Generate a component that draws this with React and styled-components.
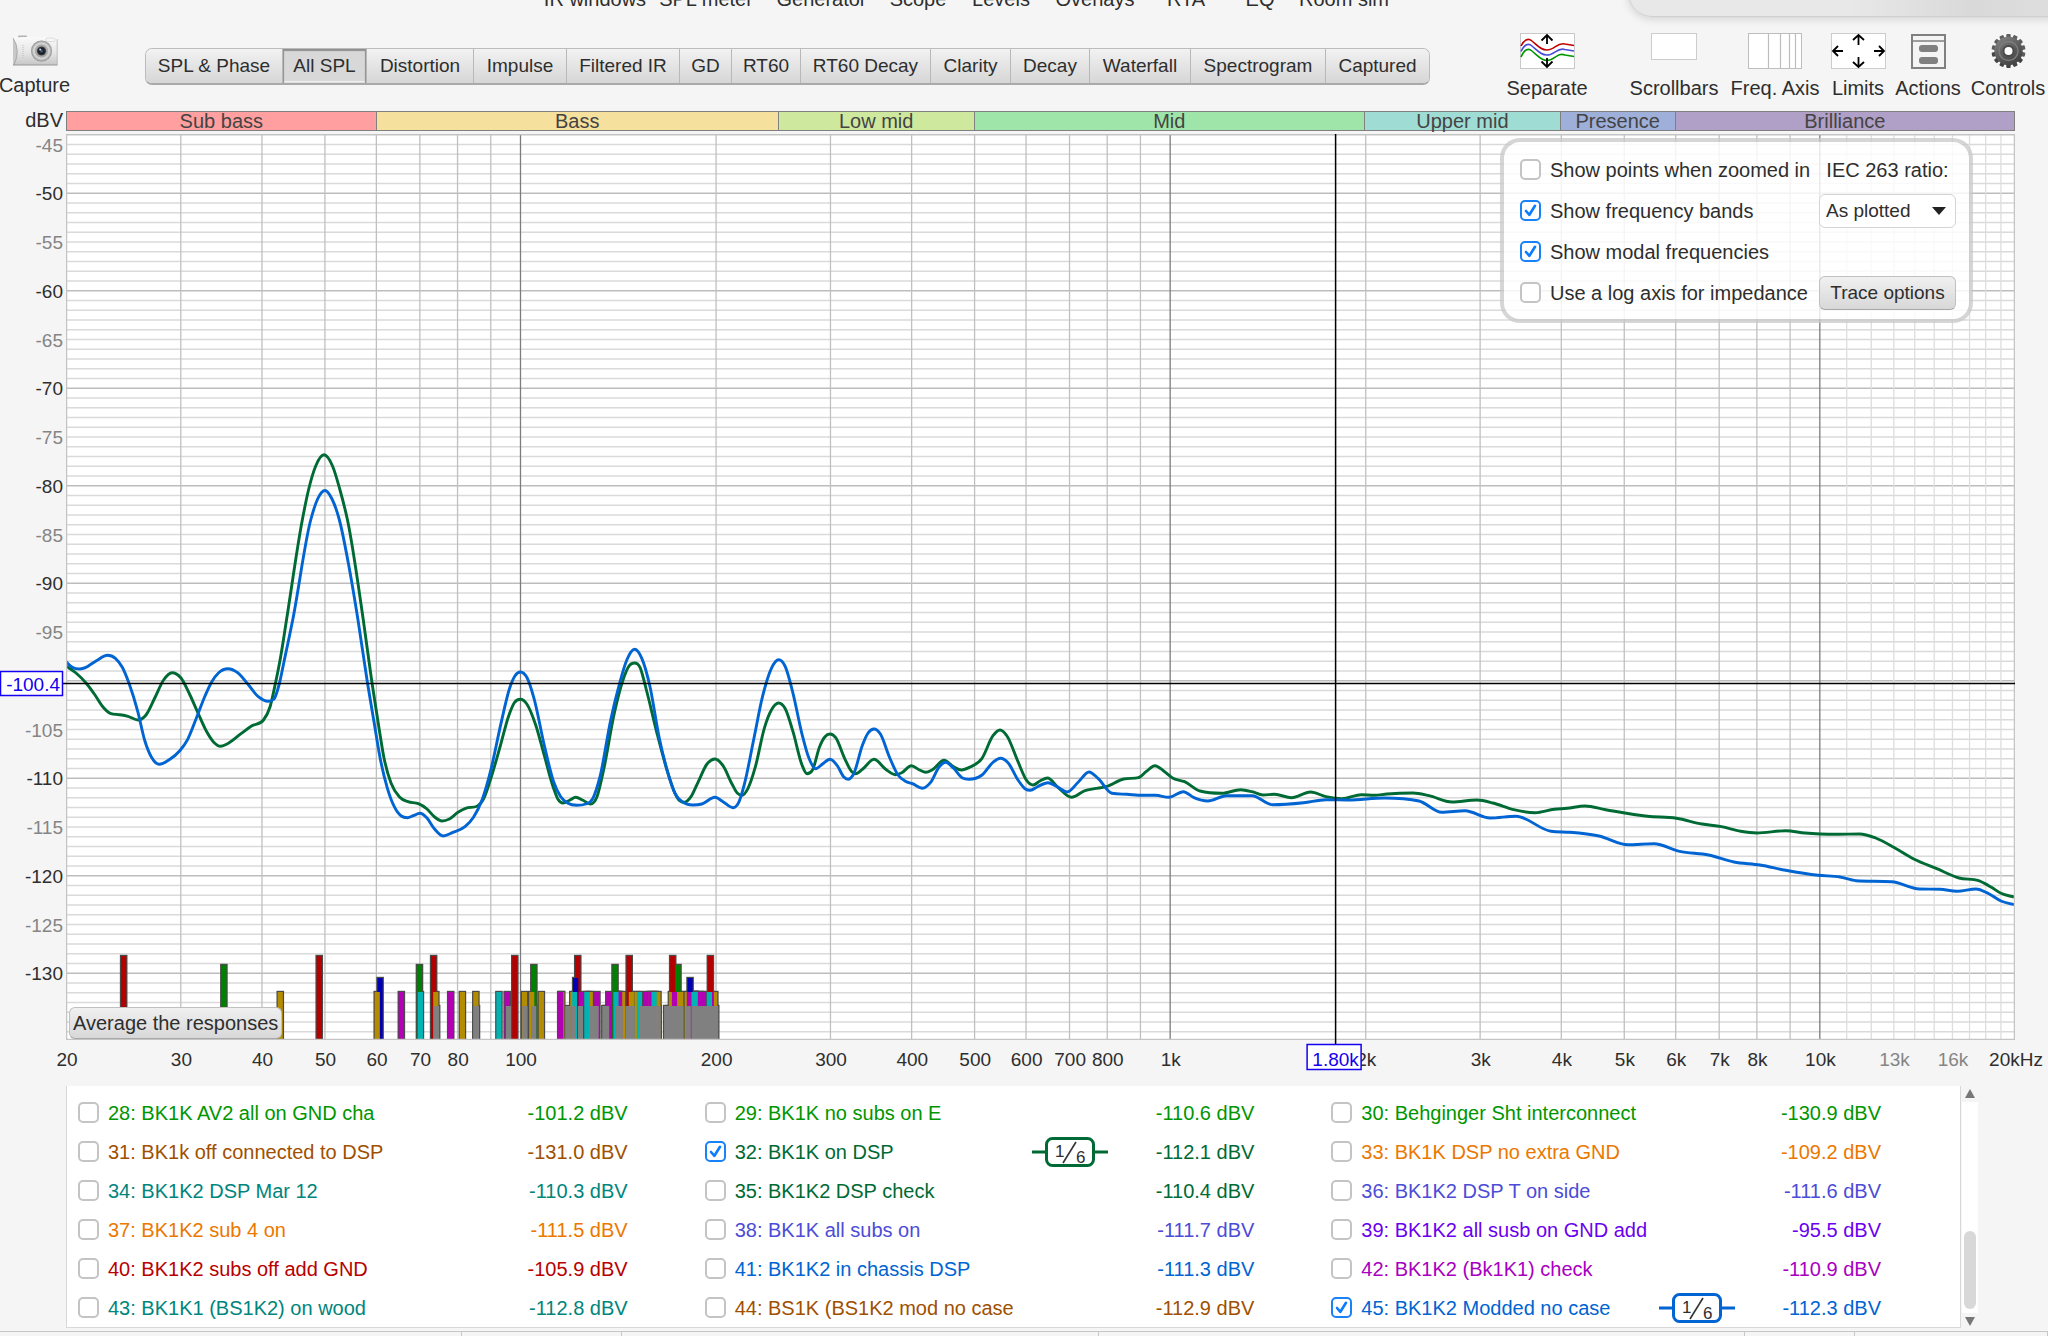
import React, { useState } from "react";
import styled, { createGlobalStyle } from "styled-components";

const FONT = '"Liberation Sans", Arial, sans-serif';
const INK = "#2e2e2e";

const GlobalStyle = createGlobalStyle`
  *, *::before, *::after { box-sizing: border-box; }
  body {
    margin: 0;
    background: #f5f5f5;
    color: ${INK};
    font: 20px/24px ${FONT};
    overflow-x: hidden;
  }
  button, select, input { font: inherit; color: inherit; margin: 0; }
`;

const Page = styled.div`
  position: relative;
  display: flex;
  flex-direction: column;
  overflow: hidden;
`;

/* ---------- top menu and toolbar ---------- */

const MainMenu = styled.nav`
  display: flex;
  align-items: flex-end;
  height: 11px;
  padding-left: 540px;
  overflow: hidden;
`;

const MenuItem = styled.button`
  flex: 0 0 ${(p) => p.$width}px;
  padding: 0;
  border: 0;
  background: none;
  white-space: nowrap;
  text-align: center;
`;

const FloatingCorner = styled.div`
  position: absolute;
  top: -40px;
  right: -40px;
  width: 460px;
  height: 57px;
  border: 1px solid #cfcfcf;
  border-radius: 24px;
  background: linear-gradient(90deg, #e8e8e8 48%, #d9d9d9 75%, #e0e0e0);
  box-shadow: 0 2px 8px rgba(0, 0, 0, 0.14);
`;

const Toolbar = styled.header`
  display: flex;
  align-items: flex-start;
  min-height: 100px;
  padding: 22px 4px 0 0;
`;

const ToolButton = styled.button`
  display: flex;
  flex-direction: column;
  align-items: center;
  gap: 7px;
  flex: 0 0 ${(p) => p.$width}px;
  width: ${(p) => p.$width}px;
  margin-top: ${(p) => (p.$lowered ? 2 : 0)}px;
  padding: 0;
  border: 0;
  background: none;
  white-space: nowrap;
  svg { display: block; flex: none; }
`;

const ToolGroup = styled.div`
  display: flex;
  gap: 12px;
  margin-left: ${(p) => (p.$push ? "auto" : "43px")};
`;

const Tabs = styled.div`
  display: flex;
  height: 37px;
  margin: 15px 0 0 76px;
  border: 1px solid #bcbcbc;
  border-bottom: 2px solid #a9a9a9;
  border-radius: 7px;
  overflow: hidden;
`;

const Tab = styled.button`
  flex: 0 0 ${(p) => p.$width}px;
  padding: 0;
  border: 0;
  border-right: 1px solid #b8b8b8;
  background: ${(p) => (p.$active ? "#d8d8d8" : "linear-gradient(#f2f2f2, #d6d6d6)")};
  box-shadow: ${(p) => (p.$active ? "inset 0 2px 1px #909090, inset 1px 0 1px #909090, inset -1px 0 1px #909090, inset 0 -2px 0 #f0f0f0" : "none")};
  font-size: 19px;
  white-space: nowrap;
  &:last-child { border-right: 0; flex-grow: 1; }
`;

/* ---------- chart ---------- */

const ChartRow = styled.section`
  display: grid;
  grid-template-columns: 66px minmax(0, 1fr) 33px;
  margin-bottom: ${(p) => p.$gap}px;
`;

const UnitLabel = styled.div`
  padding-right: 3px;
  text-align: right;
  line-height: 18px;
`;

const Bands = styled.div`
  display: flex;
  height: 20px;
  border: 1px solid #808080;
`;

const Band = styled.div`
  flex: ${(p) => p.$span} 0 0;
  border-right: 1px solid #808080;
  background: ${(p) => p.$color};
  color: #444;
  line-height: 19px;
  text-align: center;
  &:last-child { border-right: 0; }
`;

const PlotArea = styled.div`
  position: relative;
  grid-column: 2;
`;

const PlotSvg = styled.svg`
  display: block;
  width: 100%;
  height: 906px;
  overflow: visible;
  font: 19px ${FONT};
`;

const OptionsPanel = styled.form`
  position: absolute;
  top: 4px;
  right: 42px;
  display: grid;
  grid-template-columns: 287px 137px;
  grid-auto-rows: 41px;
  align-items: center;
  column-gap: 12px;
  padding: 7px 13px 6px 16px;
  border: 4px solid rgba(200, 200, 200, 0.75);
  border-radius: 20px;
  background: rgba(255, 255, 255, 0.82);
  background-clip: padding-box;
  white-space: nowrap;
`;

const CheckLabel = styled.label`
  display: flex;
  align-items: center;
  gap: 9px;
`;

const CheckFrame = styled.span`
  display: inline-grid;
  flex: none;
  > * { grid-area: 1 / 1; }
  svg { pointer-events: none; }
`;

const CheckInput = styled.input`
  appearance: none;
  width: 21px;
  height: 21px;
  border: 2px solid #c4c4c4;
  border-radius: 5px;
  background: #fff;
  &:checked { border-color: #1a82f7; }
`;

const RatioLabel = styled.label`
  text-align: center;
`;

const SelectFrame = styled.span`
  display: grid;
  align-items: center;
  > * { grid-area: 1 / 1; }
  svg { justify-self: end; margin-right: 10px; pointer-events: none; }
`;

const Select = styled.select`
  appearance: none;
  width: 100%;
  height: 34px;
  padding: 0 6px;
  border: 1px solid #d4d4d4;
  border-radius: 6px;
  background: #fff;
  font-size: 19px;
`;

const PushButton = styled.button`
  height: ${(p) => (p.$floating ? 32 : 34)}px;
  padding: 0 3px;
  border: 1px solid #c0c0c0;
  border-bottom-color: #a8a8a8;
  border-radius: 6px;
  background: linear-gradient(#f0f0f0, #d8d8d8);
  font-size: ${(p) => (p.$floating ? 20 : 19)}px;
  white-space: nowrap;
`;

const AverageSlot = styled.div`
  position: absolute;
  left: 3px;
  bottom: 1px;
  display: flex;
  width: 213px;
  button { flex: 1; }
`;

/* ---------- trace list ---------- */

const TraceRow = styled.section`
  display: grid;
  grid-template-columns: minmax(0, 1fr) 18px;
  margin: 0 69px 3px 66px;
`;

const TraceList = styled.ul`
  display: grid;
  grid-template-columns: repeat(3, 1fr);
  grid-auto-rows: 39px;
  margin: 0;
  padding: 7px 13px 0 0;
  border: solid #d8d8d8;
  border-width: 0 1px 1px 1px;
  background: #fff;
  list-style: none;
`;

const TraceItem = styled.li`
  display: flex;
  align-items: center;
  padding: 0 66px 0 11px;
  color: ${(p) => p.$color};
  white-space: nowrap;
  label { flex: 1; }
`;

const TraceValue = styled.output`
  width: 146px;
  text-align: right;
`;

const Smoothing = styled.svg`
  display: block;
  flex: none;
  width: 76px;
  height: 30px;
  overflow: visible;
  font: 17px ${FONT};
`;

const ScrollTrack = styled.div`
  display: flex;
  flex-direction: column;
  align-items: center;
  padding: 3px 0 2px;
`;

const Track = styled.div`
  display: flex;
  align-items: flex-end;
  justify-content: center;
  flex: 1;
  width: 16px;
  margin: 4px 0;
  padding-bottom: 4px;
  background: #fff;
`;

const Thumb = styled.div`
  width: 12px;
  height: 78px;
  border-radius: 6px;
  background: #d8d8d8;
`;

const Arrow = styled.div`
  border: 5px solid transparent;
  border-top-width: ${(p) => (p.$up ? 0 : 9)}px;
  border-bottom-width: ${(p) => (p.$up ? 9 : 0)}px;
  border-${(p) => (p.$up ? "bottom" : "top")}-color: #777;
`;

const StatusBar = styled.footer`
  display: flex;
  height: 5px;
  border-top: 1px solid #c8c8c8;
`;

const StatusCell = styled.div`
  flex: ${(p) => p.$span} 0 0;
  border-right: 1px solid #c8c8c8;
`;

/* ---------- data ---------- */

const MENU = [
  ["IR windows", 110], ["SPL meter", 112], ["Generator", 119], ["Scope", 74], ["Levels", 92],
  ["Overlays", 96], ["RTA", 86], ["EQ", 62], ["Room sim", 106],
];

const TABS = [
  ["SPL & Phase", 137], ["All SPL", 84], ["Distortion", 107], ["Impulse", 93], ["Filtered IR", 113],
  ["GD", 52], ["RT60", 69], ["RT60 Decay", 130], ["Clarity", 80], ["Decay", 79],
  ["Waterfall", 101], ["Spectrogram", 135], ["Captured", 103],
];

const BANDS = [
  ["Sub bass", 20, 60, "#ff9f9f"], ["Bass", 60, 250, "#f6e09d"], ["Low mid", 250, 500, "#cee99e"],
  ["Mid", 500, 2000, "#9fe5aa"], ["Upper mid", 2000, 4000, "#9fdcd4"],
  ["Presence", 4000, 6000, "#9eafd9"], ["Brilliance", 6000, 20000, "#b09fc6"],
];

const TRACES = [
  ["28: BK1K AV2 all on GND cha", "-101.2", "#009600"],
  ["29: BK1K no subs on E", "-110.6", "#009600"],
  ["30: Behginger Sht interconnect", "-130.9", "#009600"],
  ["31: BK1k off connected to DSP", "-131.0", "#a05000"],
  ["32: BK1K on DSP", "-112.1", "#006a35", true],
  ["33: BK1K DSP no extra GND", "-109.2", "#eb7800"],
  ["34: BK1K2 DSP Mar 12", "-110.3", "#00857d"],
  ["35: BK1K2 DSP check", "-110.4", "#006a35"],
  ["36: BK1K2 DSP T on side", "-111.6", "#4c4cd8"],
  ["37: BK1K2 sub 4 on", "-111.5", "#eb7800"],
  ["38: BK1K all subs on", "-111.7", "#4c4cd8"],
  ["39: BK1K2 all susb on GND add", "-95.5", "#6a00f0"],
  ["40: BK1K2 subs off add GND", "-105.9", "#b80000"],
  ["41: BK1K2 in chassis DSP", "-111.3", "#0064d2"],
  ["42: BK1K2 (Bk1K1) check", "-110.9", "#a800c0"],
  ["43: BK1K1 (BS1K2) on wood", "-112.8", "#00857d"],
  ["44: BS1K (BS1K2 mod no case", "-112.9", "#a05000"],
  ["45: BK1K2 Modded no case", "-112.3", "#0064d2", true],
];

const GREEN = [
  66,666,76,673,86,683,95,695,103,707,111,713.7,119.5,714.7,128,716.3,138,720,146,715,155,697.5,163.6,680,172,672.7,
  181,678,189.5,694,198,713,206.6,731.5,214,742.5,220.4,746.3,227,744,241,733.7,251.5,726,263.5,720,270,707,
  275.5,683,280.7,656.5,286.5,620,302.3,520,308.5,490,315.7,466,324,454.8,332.5,466,340,490,347.5,520,363.3,620,372,683,378.8,726.7,
  384,758,391,783,399.5,797,408,801.7,418.4,803.7,427,809,434.6,817,442,821,449.4,819,458,812.3,465.6,808.3,
  477,806.3,484,798,492.5,773,500,747,509,715,514.3,702.7,520.4,699.3,526.8,704,535.7,725,544.6,756.7,553.6,788.3,
  558,799.3,563,803,569.6,800.3,575.7,797.3,583,800.3,590.4,804,597,796.7,603.6,770,614.3,713.3,623,680,629.3,665.7,
  634.6,663,640,667.3,646.4,690,657,733.3,668,773.3,675,793.3,679.6,800.7,684.3,802.3,691,796.7,698,782.3,707,764,
  715,759,723,765.7,732,784,737.5,793.3,742,795.3,748,788.3,755.4,766.7,764.3,728.3,771.4,710,778.6,703,785,708.3,
  793,731.7,802,765,807,773.7,812.5,770,819.6,746.7,825,736.7,830,734,835.7,737.7,844.6,758.3,851.8,771.7,
  855.4,773.7,862.5,769.3,874,759.3,885.7,769.3,895.4,774.7,901.8,772.7,911.4,765.7,919.6,770,925.7,772.3,932,770,
  944,760.3,953.6,766.7,961.4,770,969.6,767.3,982,758.3,993,735.7,1000,730,1007,736,1018,761.7,1026.8,780.7,
  1033,785,1040,781,1047.5,778,1058,787.3,1071.5,797.3,1085,790.7,1094.6,788.7,1106,786.7,1123.6,779,1138.4,777.7,
  1146,771.7,1155,765.7,1163.4,770.7,1173,778.3,1184.6,781.7,1200,791,1222,793.3,1240.6,789.7,1252,791.7,1263,795,
  1274.6,794.3,1291.4,797.7,1310.6,792,1326,796.7,1342,798.7,1361.4,794.7,1374.3,795.3,1387,794,1413,793,1429,795.7,
  1452,802,1477,800,1493,803,1512.5,809.3,1535,812.7,1554.3,809.3,1567,808.3,1585,806,1605.7,809.7,1647.5,816.3,
  1676.4,818.3,1702,824,1721.4,826.7,1740.7,831.3,1756.8,833,1785.7,830.7,1805,833,1837,834.3,1859.6,834,1875.7,838,
  1895,848,1914.3,859.3,1936.8,868.7,1959,878,1978.6,880.7,1991.4,887.3,2001,893.3,2014,897,
];

const BLUE = [
  66,661.7,72.3,667.3,79.2,669,84.4,668,96.4,660.7,107.4,655.3,115.4,658.3,122.3,667.3,129,683.3,137.8,711.7,
  144.6,740,151.5,757.3,159.5,764.3,168.8,760,179.8,750.7,187.7,739.3,196.3,718.3,205,696,211.8,681.7,218.7,672.7,
  228,668.7,237.6,672.7,248,684.3,258.3,696.7,268.3,701.3,273.8,699.3,279,685,284,661.7,292.7,620,310.7,520,
  317.6,499,325,490.5,332,499,339.4,520,348.500,564,358,620,367.5,683,373.7,720,380.5,760,387.4,788.3,394.3,806.7,401.2,816,
  407.4,817.7,413.3,815.7,419.8,813.3,427,818,434,828.3,443.2,836,452.9,832.3,465,826.7,473.5,817.3,482,800,
  490.8,770,501,723.3,509.7,688,514.9,676,520.4,672,526.8,677.3,534,698.3,544.6,746.7,553.6,781.7,560.7,796.7,
  568,803.3,576.8,805.3,585.7,804,592.9,798.3,600,776.7,610.7,720,619.6,683.3,626.8,660,634.6,649.3,641.8,658.3,
  650,686.7,659,736.7,668,773.3,675,793.3,682,801.7,693,805,701.8,804,715,797.3,723,801.7,733,807.7,738.6,802.7,
  744.6,783.3,753.6,740,762.5,696.7,771.4,668.3,778.6,659.7,785,666,793,693.3,801.8,733.3,809,758.3,815.7,768.7,
  822.5,764,830,759.3,837.5,766,843.6,776.7,848,779.3,853.6,774,862.5,745,867.9,733.3,874,729,880.4,734,889.3,756.7,
  898,775,905.4,781.3,912.5,783.7,922.5,788.3,930.4,782.7,939.3,766.7,945.7,762.3,953.6,768.3,962.5,778,968.6,779.3,
  982,775,993,762.3,1000.4,758.3,1008,762.7,1018,780,1025,788.7,1030.4,790.3,1037.5,786.7,1048,782.7,1058,787.3,
  1067,792,1078.6,781.7,1089,772,1098,778.3,1112,793.3,1127,794.3,1143,795.3,1155.7,795.3,1168.6,797.3,1183.4,791.7,
  1194,797.7,1207.8,801,1226.4,795.7,1252,795.7,1272.7,804.7,1303.6,802.7,1326,799.7,1348.6,800,1384,798,1419,801,
  1441.8,812.3,1465,810.7,1490,818,1516,816.3,1551,831.3,1570,832.3,1599,836,1628,844.7,1654,843.7,1679.6,851.3,
  1708.5,855,1734,862,1760,865,1785.7,870.3,1818,875.3,1840,877,1856,880.7,1891.8,881.7,1919.4,889,1940,889.3,
  1957,891.3,1976,889,1988,893.3,2001,901,2014,904.7,
];

/* Monotone cubic path: smooth between samples and flat at every peak and dip. */
function smoothPath(flat) {
  const x = [];
  const y = [];
  for (let i = 0; i < flat.length; i += 2) {
    x.push(flat[i] - 66);
    y.push(flat[i + 1] - 134);
  }
  const n = x.length;
  const step = [];
  const slope = [];
  for (let i = 0; i < n - 1; i++) {
    step.push(x[i + 1] - x[i]);
    slope.push((y[i + 1] - y[i]) / step[i]);
  }
  const m = [slope[0]];
  for (let i = 1; i < n - 1; i++) {
    const a = slope[i - 1];
    const b = slope[i];
    const mid = (a * step[i] + b * step[i - 1]) / (step[i - 1] + step[i]);
    const limit = 2.6 * Math.min(Math.abs(a), Math.abs(b));
    m.push(a * b <= 0 ? 0 : Math.sign(a) * Math.min(Math.abs(mid), limit));
  }
  m.push(slope[n - 2]);
  let d = `M${x[0]} ${y[0]}`;
  for (let i = 0; i < n - 1; i++) {
    const h = step[i] / 3;
    d += `C${(x[i] + h).toFixed(2)} ${(y[i] + m[i] * h).toFixed(2)} ${(x[i + 1] - h).toFixed(2)} ${(y[i + 1] - m[i + 1] * h).toFixed(2)} ${x[i + 1].toFixed(2)} ${y[i + 1].toFixed(2)}`;
  }
  return d;
}

const W = 1949;
const H = 906;
const fx = (f) => (Math.log10(f / 20) / 3) * W;
const pct = (f) => `${((Math.log10(f / 20) / 3) * 100).toFixed(3)}%`;
const dy = (db) => 59.3 + (-50 - db) * 9.75;

const V_LINES = [];
for (const base of [10, 100, 1000, 10000]) {
  for (let k = 1; k < 10; k++) {
    const f = base * k;
    if (f > 20 && f < 20000) V_LINES.push(f);
  }
}
for (let f = 11000; f < 20000; f += 1000) V_LINES.push(f);

const lineColor = (f) => {
  if (f === 100 || f === 1000 || f === 10000) return "#7c7c7c";
  return f > 10000 ? "#dedede" : "#c0c0c0";
};

const X_LABELS = [20, 30, 40, 50, 60, 70, 80, 100, 200, 300, 400, 500, 600, 700, 800, 1000, 2000, 3000,
  4000, 5000, 6000, 7000, 8000, 10000, 13000, 16000, 20000];
const xText = (f) => (f === 20000 ? "20kHz" : f >= 1000 ? `${f / 1000}k` : `${f}`);

/* Room modes below 200 Hz, from the three axial fundamentals. */
function roomModes() {
  const out = [];
  for (let p = 0; p <= 8; p++) {
    for (let q = 0; q <= 5; q++) {
      for (let r = 0; r <= 3; r++) {
        const f = Math.hypot(24.5 * p, 34.95 * q, 60.8 * r);
        if (f < 20 || f > 200) continue;
        const key = (p ? "p" : "") + (q ? "q" : "") + (r ? "r" : "");
        out.push({ f, key });
      }
    }
  }
  return out;
}
const MODE_STYLE = {
  p: ["#b40000", 822], q: ["#008000", 831], r: ["#0000b4", 844],
  pq: ["#b48c00", 858], qr: ["#00b4b4", 858], pr: ["#b400b4", 858],
  pqr: ["#808080", 872],
};
const MODE_ORDER = ["p", "q", "r", "pq", "pr", "qr", "pqr"];
const MODES = roomModes().sort((a, b) => MODE_ORDER.indexOf(a.key) - MODE_ORDER.indexOf(b.key));

/* ---------- small parts ---------- */

function Check({ id, checked, onChange }) {
  return (
    <CheckFrame>
      <CheckInput id={id} type="checkbox" checked={checked} onChange={onChange} />
      {checked && (
        <svg width="21" height="21" viewBox="0 0 21 21" aria-hidden="true">
          <path d="M6 11 9.400 14.800 15 5.800" fill="none" stroke="#0a7cff" strokeWidth="2.6" strokeLinecap="round" strokeLinejoin="round" />
        </svg>
      )}
    </CheckFrame>
  );
}

function SmoothingBadge({ color }) {
  return (
    <Smoothing viewBox="0 0 76 30" role="img" aria-label="1/6 octave smoothing">
      <path d="M0 15H14M62 15H76" stroke={color} strokeWidth="3" />
      <rect x="14.5" y="1.5" width="47" height="27" rx="6" fill="#fff" stroke={color} strokeWidth="3" />
      <path d="M31 26 44 5" stroke="#333" strokeWidth="1.6" />
      <text x="23" y="20" fill={INK}>1</text>
      <text x="44" y="26" fill={INK}>6</text>
    </Smoothing>
  );
}

const CameraIcon = () => (
  <svg width="46" height="31" viewBox="0 0 46 31" aria-hidden="true">
    <defs>
      <linearGradient id="camBody" x1="0" y1="0" x2="0" y2="1">
        <stop offset="0" stopColor="#fafafa" /><stop offset="0.55" stopColor="#e6e6e6" /><stop offset="1" stopColor="#c6c6c6" />
      </linearGradient>
      <radialGradient id="camLens"><stop offset="0.5" stopColor="#8b8b8b" /><stop offset="0.75" stopColor="#d6d6d6" /><stop offset="1" stopColor="#8c8c8c" /></radialGradient>
      <radialGradient id="camGlass"><stop offset="0" stopColor="#4a6c9a" /><stop offset="0.55" stopColor="#14181e" /><stop offset="1" stopColor="#4a4a4a" /></radialGradient>
    </defs>
    <rect x="6" y="0.5" width="9" height="3" rx="1" fill="#b4b4b4" />
    <path d="M1 3Q5 2 12 2H44Q45.5 2 45.5 4V30H1Z" fill="url(#camBody)" />
    <path d="M1 3Q9 15 2 30H1Z" fill="#c8c8c8" />
    <path d="M1 3Q9 15 2 30" fill="none" stroke="#a0a0a0" strokeWidth="0.8" />
    <path d="M1 30H45.5" stroke="#989898" />
    <path d="M45.2 4V30" stroke="#b6b6b6" strokeWidth="0.8" />
    <path d="M11 10V23" stroke="#c3c3c3" strokeWidth="1.2" strokeDasharray="1 1" />
    <rect x="34" y="3" width="9" height="3.5" rx="1" fill="#f6f6f6" stroke="#cccccc" strokeWidth="0.6" />
    <circle cx="29.5" cy="16" r="10.5" fill="url(#camLens)" />
    <circle cx="29.5" cy="16" r="7" fill="#a6a6a6" stroke="#dedede" strokeWidth="0.8" />
    <circle cx="29.5" cy="16" r="4.6" fill="url(#camGlass)" />
    <circle cx="28.2" cy="14.6" r="1" fill="#c9d6ea" />
  </svg>
);

const SeparateIcon = () => (
  <svg width="55" height="36" viewBox="0 0 55 36" fill="none" aria-hidden="true">
    <rect x="0.5" y="0.5" width="54" height="35" fill="#fff" stroke="#c8c8c8" />
    <g strokeWidth="1.6">
      <path d="M1 13C4 7 8 4.5 12 8C18 13 21 17 27 17C35 17 37 9 45 11L54 12.5" stroke="#c00000" />
      <path d="M1 18.5C4 12 8 9.5 12 13C18 18 21 22 27 22C35 22 37 14 45 16.5L54 18" stroke="#4c4cd8" />
      <path d="M1 24C4 17 8 14.5 12 18C18 23 21 27.5 27 27.5C35 27.5 37 19 45 22L54 23.5" stroke="#009600" />
    </g>
    <path d="M27 11V2M21.5 7.5 27 2 32.5 7.5M27 25V34M21.5 28.5 27 34 32.5 28.5" stroke="#000" strokeWidth="1.8" />
  </svg>
);

const ScrollbarsIcon = () => (
  <svg width="46" height="36" viewBox="0 0 46 36" aria-hidden="true">
    <rect x="0.5" y="0.5" width="45" height="26" fill="#fff" stroke="#cccccc" />
  </svg>
);

const FreqAxisIcon = () => (
  <svg width="54" height="36" viewBox="0 0 54 36" aria-hidden="true">
    <rect x="0.5" y="0.5" width="53" height="35" fill="#fff" stroke="#bdbdbd" />
    <path d="M20.5 1V35M32.5 1V35M41.5 1V35M47.5 1V35" stroke="#bdbdbd" strokeWidth="1.2" />
  </svg>
);

const LimitsIcon = () => (
  <svg width="55" height="36" viewBox="0 0 55 36" aria-hidden="true">
    <rect x="0.5" y="0.5" width="54" height="35" fill="#fff" stroke="#cccccc" />
    <path d="M27.5 12V2M22 7 27.5 2 33 7M27.5 24V34M22 29 27.5 34 33 29M12 18H2M7 13 2 18 7 23M43 18H53M48 13 53 18 48 23" fill="none" stroke="#000" strokeWidth="1.8" />
  </svg>
);

const ActionsIcon = () => (
  <svg width="35" height="36" viewBox="0 0 35 36" aria-hidden="true">
    <rect x="1" y="2" width="33" height="33" fill="#f4f4f4" stroke="#808080" strokeWidth="2" />
    <path d="M1 8H34" stroke="#808080" strokeWidth="1.5" />
    <rect x="8" y="12" width="19" height="7" rx="3" fill="#808080" />
    <rect x="8" y="24" width="19" height="7" rx="3" fill="#808080" />
  </svg>
);

const GearIcon = () => (
  <svg width="35" height="36" viewBox="0 0 35 36" aria-hidden="true">
    <defs>
      <linearGradient id="gearBody" x1="0" y1="0" x2="0.6" y2="1">
        <stop offset="0" stopColor="#8a8a8a" /><stop offset="0.5" stopColor="#626262" /><stop offset="1" stopColor="#444" />
      </linearGradient>
    </defs>
    <g transform="translate(17.5 18)">
      {Array.from({ length: 14 }, (_, i) => (
        <rect key={i} x="-2.2" y="-17" width="4.4" height="6" rx="1" fill={i > 4 && i < 11 ? "#424242" : "#5d5d5d"} transform={`rotate(${(i * 360) / 14})`} />
      ))}
      <circle r="14.2" fill="url(#gearBody)" />
      <circle r="9.5" fill="none" stroke="#7d7d7d" strokeWidth="1.4" />
      <circle r="6" fill="#4a4a4a" />
      <circle r="4" fill="#fff" />
    </g>
  </svg>
);

function Plot() {
  const dbLines = [];
  for (let db = -44; db >= -136; db--) dbLines.push(db);
  const dbLabels = [];
  for (let db = -45; db >= -130; db -= 5) if (db !== -100) dbLabels.push(db);
  const cursorX = fx(1800);
  const cursorY = 549.5;

  return (
    <PlotSvg role="img" aria-label="Level in dBV against frequency">
      <svg width="100%" height={H} viewBox={`0 0 ${W} ${H}`} preserveAspectRatio="none">
        <rect width={W} height={H} fill="#fff" />
        {dbLines.map((db) => (
          <path key={db} d={`M0 ${dy(db)}H${W}`} stroke={db % 10 === 0 ? "#bdbdbd" : "#dadada"} strokeWidth="1.4" />
        ))}
        {V_LINES.map((f) => (
          <path key={f} d={`M${fx(f) + 0.4} 0V${H}`} stroke={lineColor(f)} strokeWidth="1.3" />
        ))}
        {MODES.map((m, i) => {
          const top = MODE_STYLE[m.key][1];
          return <rect key={i} x={fx(m.f) - 3.4} y={top - 1.2} width="7.6" height={H - top + 1.2} fill="#4a4a4a" />;
        })}
        {MODES.map((m, i) => {
          const [fill, top] = MODE_STYLE[m.key];
          return <rect key={i} x={fx(m.f) - 2.2} y={top} width="5.2" height={H - top} fill={fill} />;
        })}
        <path d={smoothPath(GREEN)} fill="none" stroke="#006a35" strokeWidth="2.9" strokeLinejoin="round" />
        <path d={smoothPath(BLUE)} fill="none" stroke="#0064d2" strokeWidth="2.9" strokeLinejoin="round" />
        <rect x="0.5" y="0.5" width={W - 1} height={H - 1} fill="none" stroke="#c4c4c4" strokeWidth="1.5" />
      </svg>
      <g textAnchor="end" fill={INK}>
        {dbLabels.map((db) => (
          <text key={db} x="-3" y={Math.round(dy(db)) + 7} fill={db % 10 === 0 ? INK : "#858585"}>{db}</text>
        ))}
      </g>
      <g textAnchor="middle">
        {X_LABELS.map((f) => (
          <text key={f} x={pct(f)} dx="1" y={H + 26} fill={f === 13000 || f === 16000 ? "#858585" : INK}>{xText(f)}</text>
        ))}
      </g>
      <path d="M-3 549.5H0" stroke="#000" strokeWidth="1.5" />
      <line x1="0" x2="100%" y1={cursorY} y2={cursorY} stroke="#000" strokeWidth="1.5" />
      <line x1={pct(1800)} x2={pct(1800)} y1="0" y2={H + 4} stroke="#000" strokeWidth="1.5" />
      <rect x="-65.5" y="537.5" width="62" height="24" fill="#fff" stroke="#1400f0" strokeWidth="1.5" />
      <text x="-6" y="557" textAnchor="end" fill="#1400f0">-100.4</text>
      <svg x={`${((cursorX / W) * 100).toFixed(3)}%`} y={H + 4} overflow="visible">
        <rect x="-28.5" y="0.5" width="54" height="25" fill="#fff" stroke="#1400f0" strokeWidth="1.5" />
        <text x="0" y="22" textAnchor="middle" fill="#1400f0">1.80k</text>
      </svg>
    </PlotSvg>
  );
}

function Options() {
  const [state, setState] = useState({ points: false, bands: true, modal: true, log: false });
  const row = (key, text) => (
    <CheckLabel htmlFor={key}>
      <Check id={key} checked={state[key]} onChange={() => setState({ ...state, [key]: !state[key] })} />
      {text}
    </CheckLabel>
  );
  return (
    <OptionsPanel onSubmit={(e) => e.preventDefault()}>
      {row("points", "Show points when zoomed in")}
      <RatioLabel htmlFor="ratio">IEC 263 ratio:</RatioLabel>
      {row("bands", "Show frequency bands")}
      <SelectFrame>
        <Select id="ratio" defaultValue="As plotted"><option>As plotted</option></Select>
        <svg width="14" height="8" viewBox="0 0 14 8" aria-hidden="true"><path d="M0 0H14L7 8Z" fill="#222" /></svg>
      </SelectFrame>
      {row("modal", "Show modal frequencies")}
      <span />
      {row("log", "Use a log axis for impedance")}
      <PushButton type="button">Trace options</PushButton>
    </OptionsPanel>
  );
}

function Traces() {
  const [on, setOn] = useState(() => TRACES.map((t) => Boolean(t[3])));
  return (
    <TraceRow>
      <TraceList>
        {TRACES.map(([name, value, color, smoothed], i) => (
          <TraceItem key={name} $color={color}>
            <CheckLabel htmlFor={`trace${i}`}>
              <Check id={`trace${i}`} checked={on[i]} onChange={() => setOn(on.map((v, k) => (k === i ? !v : v)))} />
              {name}
            </CheckLabel>
            {smoothed && <SmoothingBadge color={color} />}
            <TraceValue htmlFor={`trace${i}`}>{value} dBV</TraceValue>
          </TraceItem>
        ))}
      </TraceList>
      <ScrollTrack>
        <Arrow $up />
        <Track><Thumb /></Track>
        <Arrow />
      </ScrollTrack>
    </TraceRow>
  );
}

export default function App() {
  const [tab, setTab] = useState("All SPL");
  return (
    <Page>
      <GlobalStyle />
      <MainMenu>
        {MENU.map(([name, width]) => <MenuItem key={name} $width={width}>{name}</MenuItem>)}
      </MainMenu>
      <Toolbar>
        <ToolButton $width={69} $lowered><CameraIcon />Capture</ToolButton>
        <Tabs role="tablist">
          {TABS.map(([name, width]) => (
            <Tab key={name} role="tab" aria-selected={tab === name} $width={width} $active={tab === name} onClick={() => setTab(name)}>{name}</Tab>
          ))}
        </Tabs>
        <ToolGroup $push>
          <ToolButton $width={80}><SeparateIcon />Separate</ToolButton>
        </ToolGroup>
        <ToolGroup>
          <ToolButton $width={88}><ScrollbarsIcon />Scrollbars</ToolButton>
          <ToolButton $width={90}><FreqAxisIcon />Freq. Axis</ToolButton>
          <ToolButton $width={52}><LimitsIcon />Limits</ToolButton>
          <ToolButton $width={64}><ActionsIcon />Actions</ToolButton>
          <ToolButton $width={72}><GearIcon />Controls</ToolButton>
        </ToolGroup>
      </Toolbar>
      <FloatingCorner />
      <ChartRow $gap={3}>
        <UnitLabel>dBV</UnitLabel>
        <Bands>
          {BANDS.map(([name, from, to, color]) => (
            <Band key={name} $span={Math.round(Math.log10(to / from) * 1000)} $color={color}>{name}</Band>
          ))}
        </Bands>
      </ChartRow>
      <ChartRow $gap={46}>
        <PlotArea>
          <Plot />
          <Options />
          <AverageSlot><PushButton $floating>Average the responses</PushButton></AverageSlot>
        </PlotArea>
      </ChartRow>
      <Traces />
      <StatusBar>
        <StatusCell $span={462} />
        <StatusCell $span={160} />
        <StatusCell $span={477} />
        <StatusCell $span={647} />
        <StatusCell $span={109} />
        <StatusCell $span={193} />
      </StatusBar>
    </Page>
  );
}
